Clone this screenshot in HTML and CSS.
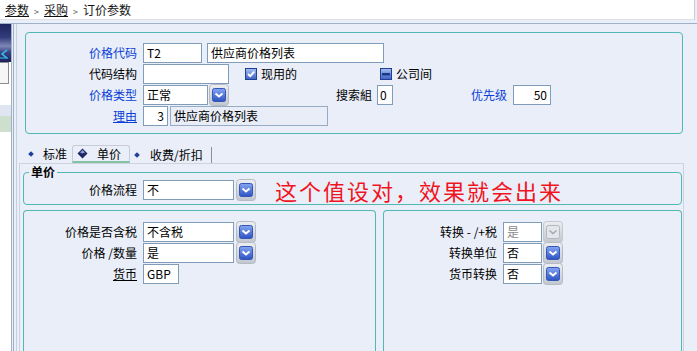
FILE: index.html
```html
<!DOCTYPE html>
<html lang="zh">

<head>
    <meta charset="UTF-8">
    <title>订价参数</title>
    <link rel="stylesheet" href="styles.css">
</head>

<body>
    <svg class="defs" width="0" height="0">
        <defs>
            <linearGradient id="gframe" x1="0" y1="0" x2="0" y2="1">
                <stop offset="0" stop-color="#eceef2"/>
                <stop offset="1" stop-color="#c2c6ce"/>
            </linearGradient>
            <linearGradient id="gblue" x1="0" y1="0" x2="0" y2="1">
                <stop offset="0" stop-color="#86a6f2"/>
                <stop offset="1" stop-color="#2d52c2"/>
            </linearGradient>
            <linearGradient id="gcb" x1="0" y1="0" x2="0" y2="1">
                <stop offset="0" stop-color="#a9c0f0"/>
                <stop offset="1" stop-color="#3a60c6"/>
            </linearGradient>
            <symbol id="dd" viewBox="0 0 20 22">
                <rect x="0.5" y="0.5" width="19" height="21" rx="3" fill="url(#gframe)" stroke="#b6bac2"/>
                <rect x="3.5" y="4.5" width="13" height="13" rx="2" fill="url(#gblue)" stroke="#3456b6"/>
                <path d="M6.5 9.5 L10 12.5 L13.5 9.5" fill="none" stroke="#fff" stroke-width="2"/>
            </symbol>
            <symbol id="ddoff" viewBox="0 0 20 22">
                <rect x="0.5" y="0.5" width="19" height="21" rx="3" fill="url(#gframe)" stroke="#c4c8ce"/>
                <rect x="3.5" y="4.5" width="13" height="13" rx="2" fill="#e4e6ea" stroke="#b4b8c0"/>
                <path d="M6.5 9.5 L10 12.5 L13.5 9.5" fill="none" stroke="#a4a8b0" stroke-width="1.5"/>
            </symbol>
            <symbol id="cb" viewBox="0 0 12 12">
                <rect x="0.5" y="0.5" width="11" height="11" fill="url(#gcb)" stroke="#1f3f90"/>
                <path d="M3 6 L5.2 8.2 L9.2 3.6" fill="none" stroke="#fff" stroke-width="1.8"/>
            </symbol>
            <symbol id="cbmix" viewBox="0 0 12 12">
                <rect x="0.5" y="0.5" width="11" height="11" fill="url(#gcb)" stroke="#1f3f90"/>
                <rect x="2" y="5" width="8" height="2.5" fill="#1c3888"/>
            </symbol>
        </defs>
    </svg>

    <div class="crumb">
        <a>参数</a><span class="sep">&gt;</span><a>采购</a><span class="sep">&gt;</span>订价参数
    </div>

    <div class="main">
        <div class="side">
            <div class="side-head">
                <svg width="11" height="38" viewBox="0 0 11 38">
                    <path d="M7 26 L2 30 L7 34" fill="none" stroke="#35c4f2" stroke-width="1.6"/>
                    <path d="M0 34 L8 34" stroke="#35c4f2" stroke-width="1"/>
                </svg>
            </div>
            <div class="side-btn"></div>
            <div class="side-gap"></div>
            <div class="side-sel"></div>
            <div class="side-green"></div>
        </div>

        <div class="page">
            <div class="page-in">

                <!-- header fields -->
                <div class="group top-group">
                    <div class="row">
                        <span class="lbl blue">价格代码</span>
                        <span class="inp w-code">T2</span>
                        <span class="inp w-desc">供应商价格列表</span>
                    </div>
                    <div class="row">
                        <span class="lbl">代码结构</span>
                        <span class="inp w-struct"></span>
                        <svg class="chk chk-active"><use href="#cb"/></svg>
                        <span class="chk-lbl">现用的</span>
                        <svg class="chk chk-inter"><use href="#cbmix"/></svg>
                        <span class="chk-lbl">公司间</span>
                    </div>
                    <div class="row">
                        <span class="lbl blue">价格类型</span>
                        <span class="inp w-type">正常</span>
                        <svg class="dd"><use href="#dd"/></svg>
                        <span class="side-lbl search-lbl">搜索組</span>
                        <span class="inp w-search">0</span>
                        <span class="side-lbl blue prio-lbl">优先级</span>
                        <span class="inp num w-prio">50</span>
                    </div>
                    <div class="row">
                        <span class="lbl blue link">理由</span>
                        <span class="inp num w-reason">3</span>
                        <span class="inp off w-reason-txt">供应商价格列表</span>
                    </div>
                </div>

                <div class="tabs">
                    <div class="tab t-std"><i class="dot"></i>标准</div>
                    <div class="tab t-price on">
                        <svg class="gem" width="11" height="11" viewBox="0 0 11 11">
                            <polygon points="5.5,0.5 10.5,5.5 5.5,10.5 0.5,5.5" fill="#1b2766"/>
                            <polygon points="5.5,2 8,4.5 5.5,5.5 3,4.5" fill="#8fa0d8"/>
                        </svg>单价
                    </div>
                    <div class="tab t-fee"><i class="dot"></i>收费/折扣</div>
                </div>

                <div class="panel">
                    <fieldset class="group price-group">
                        <legend>单价</legend>
                        <div class="row">
                            <span class="lbl">价格流程</span>
                            <span class="inp w-flow">不</span>
                            <svg class="dd dd-far"><use href="#dd"/></svg>
                            <span class="note">这个值设对，效果就会出来</span>
                        </div>
                    </fieldset>

                    <div class="cols">
                        <div class="group col col-left">
                            <div class="row">
                                <span class="lbl">价格是否含税</span>
                                <span class="inp w-flow">不含税</span>
                                <svg class="dd dd-far"><use href="#dd"/></svg>
                            </div>
                            <div class="row">
                                <span class="lbl">价格 /数量</span>
                                <span class="inp w-flow">是</span>
                                <svg class="dd dd-far"><use href="#dd"/></svg>
                            </div>
                            <div class="row">
                                <span class="lbl link">货币</span>
                                <span class="inp w-cur">GBP</span>
                            </div>
                        </div>
                        <div class="group col col-right">
                            <div class="row">
                                <span class="lbl">转换 - /+税</span>
                                <span class="inp w-yn dim">是</span>
                                <svg class="dd"><use href="#ddoff"/></svg>
                            </div>
                            <div class="row">
                                <span class="lbl">转换单位</span>
                                <span class="inp w-yn">否</span>
                                <svg class="dd"><use href="#dd"/></svg>
                            </div>
                            <div class="row">
                                <span class="lbl">货币转换</span>
                                <span class="inp w-yn">否</span>
                                <svg class="dd"><use href="#dd"/></svg>
                            </div>
                        </div>
                    </div>
                </div>

            </div>
        </div>
    </div>
</body>

</html>
```

FILE: styles.css
```css
* {
    margin: 0;
    padding: 0;
    box-sizing: border-box;
}

body {
    width: 697px;
    height: 351px;
    overflow: hidden;
    background: #e9eef8;
    font-family: "Noto Sans CJK SC", "Liberation Sans", sans-serif;
    font-size: 12px;
    color: #000;
}

.defs {
    position: absolute;
    width: 0;
    height: 0;
}

/* breadcrumb */
.crumb {
    height: 20px;
    margin-right: 2px;
    padding: 2px 0 0 5px;
    line-height: 15px;
    background: #fff;
    border-bottom: 1px solid #dde2ea;
    border-right: 1px solid #c6cdd8;
    color: #111;
}

.crumb a {
    color: #111;
    text-decoration: underline;
}

.crumb .sep {
    margin: 0 5px;
    font-size: 9px;
    color: #555;
}

.main {
    display: flex;
    height: 328px;
    margin-top: 3px;
    border-top: 1px solid #9fb1c9;
}

/* left strip */
.side {
    width: 12px;
    display: flex;
    flex-direction: column;
    background: #fff;
    border-right: 1px solid #9fb1c9;
}

.side-head {
    height: 38px;
    background: linear-gradient(#1d245e, #333c7a 35%, #7c86b6 58%, #3a4282 75%, #1c225c);
}

.side-head svg {
    display: block;
}

.side-btn {
    height: 22px;
    margin-right: 2px;
    background: #f6f6f6;
    border: 1px solid #8d8d8d;
    border-left: 0;
}

.side-gap {
    height: 21px;
}

.side-sel {
    height: 11px;
    background: #dfe5f1;
}

.side-green {
    height: 16px;
    background: #cddfcd;
}

.page {
    flex: 1;
    margin-left: 1px;
    border-left: 1px solid #9fb1c9;
}

.page-in {
    height: 100%;
    margin-left: 2px;
    border-left: 1px solid #c3d0e2;
    display: flex;
    flex-direction: column;
}

/* group boxes */
.group {
    border: 1px solid #52b8b3;
    border-radius: 4px;
}

.top-group {
    margin: 8px 14px 0 8px;
    padding: 9px 0 7px 0;
}

.row {
    display: flex;
    align-items: center;
    height: 21px;
}

.lbl {
    width: 113px;
    margin-right: 6px;
    text-align: right;
    white-space: nowrap;
}

.top-group .lbl {
    width: 111px;
}

.blue {
    color: #0b3fd6;
}

.link {
    text-decoration: underline;
}

.inp {
    height: 20px;
    padding: 0 3px;
    line-height: 18px;
    background: #fff;
    border: 1px solid #7f9db9;
    white-space: nowrap;
    overflow: hidden;
}

.inp.num {
    text-align: right;
}

.inp.off {
    background: #e8edf7;
    border-color: #98abc6;
}

.inp.dim {
    color: #8a8a8a;
}

.w-code { width: 59px; }
.w-desc { width: 177px; margin-left: 5px; }
.w-struct { width: 86px; }
.w-type { width: 65px; }
.w-search { width: 16px; padding: 0 2px; }
.w-prio { width: 38px; }
.w-reason { width: 25px; }
.w-reason-txt { width: 158px; margin-left: 2px; }
.w-flow { width: 91px; }
.w-cur { width: 36px; }
.w-yn { width: 39px; }

.dd {
    width: 20px;
    height: 22px;
    margin-left: 1px;
}

.dd-far {
    margin-left: 2px;
}

.chk {
    width: 12px;
    height: 12px;
}

.chk-active {
    margin-left: 16px;
}

.chk-inter {
    margin-left: 83px;
}

.chk-lbl {
    margin-left: 4px;
}

.side-lbl {
    margin-right: 5px;
}

.search-lbl {
    margin-left: 107px;
}

.prio-lbl {
    margin-left: 78px;
    margin-right: 6px;
}

/* tabs */
.tabs {
    display: flex;
    height: 18px;
    margin: 11px 0 0 8px;
}

.tab {
    display: flex;
    align-items: center;
    line-height: 16px;
    white-space: nowrap;
}

.dot {
    width: 4px;
    height: 4px;
    margin-right: 10px;
    background: #1f3f9a;
    transform: rotate(45deg);
}

.t-std {
    width: 47px;
    padding-left: 4px;
}

.t-price {
    width: 58px;
    padding-left: 4px;
    border: 1px solid #c6ccd6;
    border-bottom: 2px solid #83c3a3;
    border-radius: 3px 3px 0 0;
}

.gem {
    margin-right: 9px;
}

.t-fee {
    width: 82px;
    padding-left: 5px;
    border-right: 1px solid #8b9099;
    margin-top: 2px;
    height: 16px;
}

.t-fee .dot {
    margin-right: 11px;
}

/* tab panel */
.panel {
    flex: 1;
    min-height: 0;
    display: flex;
    flex-direction: column;
    margin: 0 13px 0 2px;
    padding: 1px 1px 0 3px;
    border: 1px solid #cdd3dd;
    border-bottom: 0;
}

.price-group {
    min-width: 0;
    padding: 0 0 4px 0;
}

.price-group legend {
    margin-left: 5px;
    padding: 0 2px;
    line-height: 14px;
    font-weight: bold;
}

.note {
    margin-left: 19px;
    font-size: 22px;
    line-height: 22px;
    letter-spacing: 2px;
    color: #f0141e;
    white-space: nowrap;
}

.cols {
    flex: 1;
    min-height: 0;
    display: flex;
    gap: 7px;
    margin-top: 5px;
}

.col {
    padding-top: 10px;
    border-bottom: 0;
    border-radius: 4px 4px 0 0;
}

.col-left {
    width: 353px;
}

.col-right {
    flex: 1;
}
```
